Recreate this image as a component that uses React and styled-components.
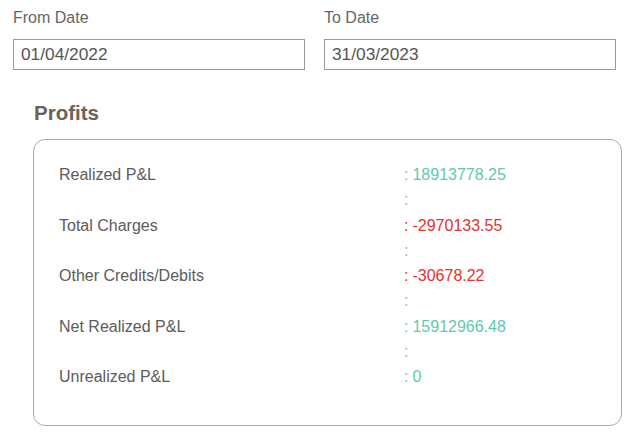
import React from "react";
import styled, { createGlobalStyle } from "styled-components";

const Global = createGlobalStyle`
  html, body { margin: 0; padding: 0; background: #fff; }
  body { font-family: "Liberation Sans", Arial, sans-serif; }
`;

const Page = styled.div`
  padding: 8px 10px 0 13px;
  width: 632px;
  box-sizing: border-box;
`;

const DateRow = styled.div`
  display: grid;
  grid-template-columns: 292px 292px;
  column-gap: 19px;
`;

const Field = styled.div`
  display: flex;
  flex-direction: column;
`;

const Label = styled.label`
  font-size: 16px;
  line-height: 20px;
  color: #666;
  margin-bottom: 11px;
`;

const Input = styled.input`
  height: 31px;
  box-sizing: border-box;
  border: 1px solid #999;
  border-radius: 0;
  padding: 0 7px;
  font-family: "Liberation Sans", Arial, sans-serif;
  font-size: 17.3px;
  color: #555;
  outline: none;
`;

const Section = styled.div`
  padding: 0 0 0 20px;
`;

const Heading = styled.h2`
  margin: 31px 0 0 1px;
  font-size: 20.5px;
  line-height: 24px;
  font-weight: bold;
  color: #6b625b;
`;

const Card = styled.div`
  margin-top: 14px;
  border: 1px solid #aaa;
  border-radius: 12px;
  padding: 22px 0 36px 25px;
  height: 287px;
  box-sizing: border-box;
`;

const Row = styled.div`
  display: grid;
  grid-template-columns: 345px 1fr;
  font-size: 16px;
  line-height: 25.25px;
`;

const Name = styled.div`
  color: #5c5c5c;
`;

const Value = styled.div`
  color: ${(p) => (p.$neg ? "#ee2e2a" : "#62c9ad")};
`;

const Colon = styled.span`
  color: ${(p) => (p.$neg ? "#ee2e2a" : "#8cbcb4")};
  margin-right: 4px;
`;

const Sep = styled.div`
  grid-column: 2;
  color: #8cbcb4;
`;

const rows = [
  { name: "Realized P&L", value: "18913778.25" },
  { name: "Total Charges", value: "-2970133.55", neg: true },
  { name: "Other Credits/Debits", value: "-30678.22", neg: true },
  { name: "Net Realized P&L", value: "15912966.48" },
  { name: "Unrealized P&L", value: "0" },
];

export default function App() {
  return (
    <>
      <Global />
      <Page>
        <DateRow>
          <Field>
            <Label>From Date</Label>
            <Input defaultValue="01/04/2022" />
          </Field>
          <Field>
            <Label>To Date</Label>
            <Input defaultValue="31/03/2023" />
          </Field>
        </DateRow>
        <Section>
          <Heading>Profits</Heading>
          <Card>
            {rows.map((r, i) => (
              <Row key={r.name}>
                <Name>{r.name}</Name>
                <Value $neg={r.neg}>
                  <Colon $neg={r.neg}>:</Colon>
                  {r.value}
                </Value>
                {i < rows.length - 1 && <Sep>:</Sep>}
              </Row>
            ))}
          </Card>
        </Section>
      </Page>
    </>
  );
}
